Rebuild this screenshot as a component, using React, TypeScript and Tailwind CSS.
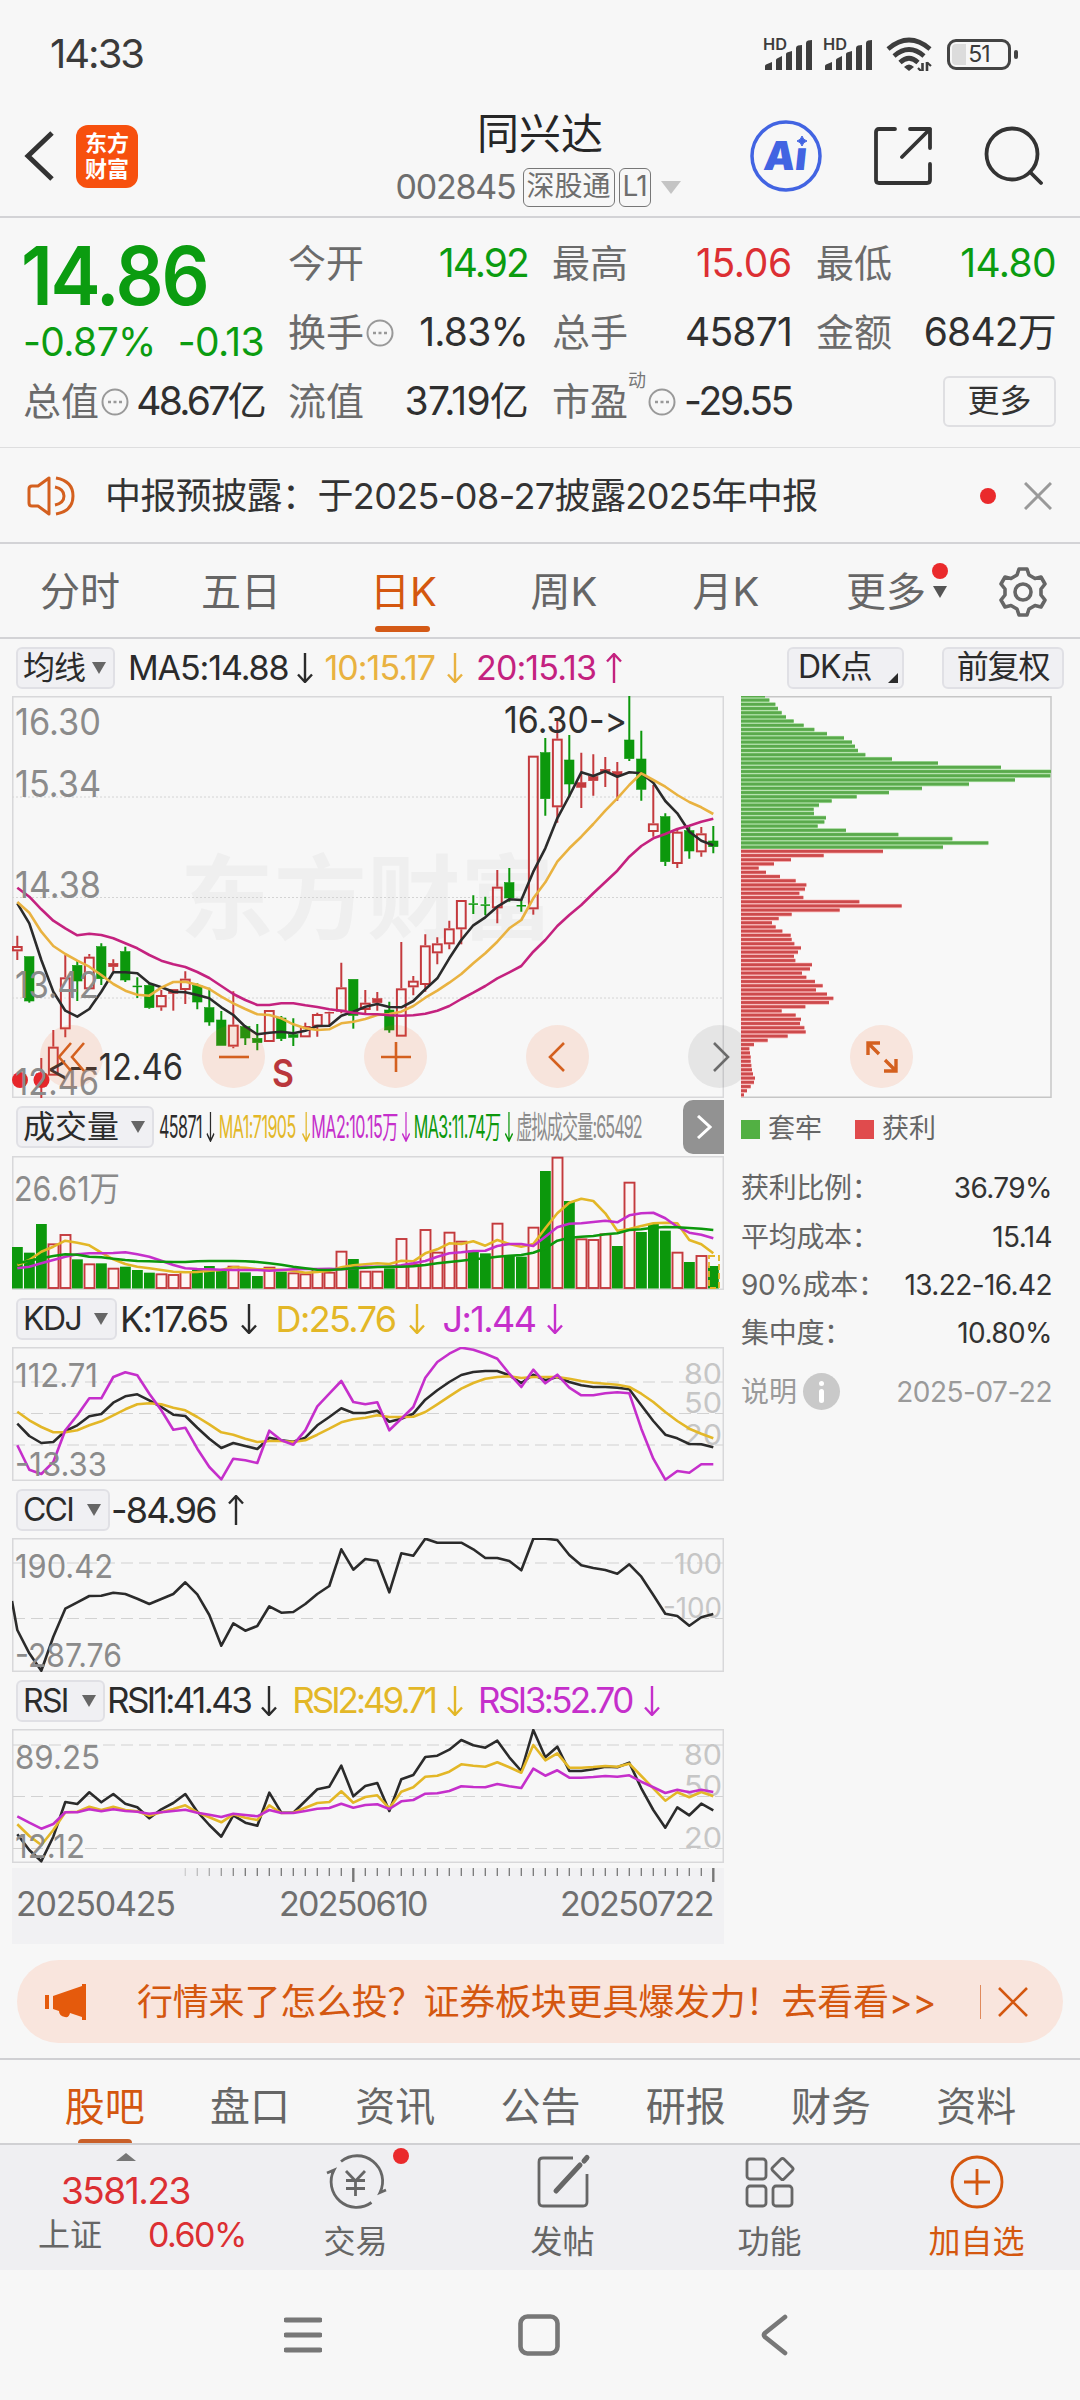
import type { ReactNode } from 'react';

type Candle = [number, number, number, number, 'r' | 'g'];

// every series is stored in thirds of a pixel, one entry per trading day
const STEP = 12;
const dayX = (i: number) => 5.3 + i * STEP;
const toPoints = (ys: number[], top: number) =>
    ys.map((y, i) => `${dayX(i)},${((y - top) / 3).toFixed(1)}`).join(' ');

// high, body top, body bottom, low
const candles: Candle[] = [
    [737, 768, 784, 810, 'r'], [800, 800, 933, 938, 'g'], [1104, 1150, 1190, 1225, 'r'], [1020, 1070, 1157, 1157, 'r'],
    [795, 862, 1018, 1042, 'r'], [812, 826, 873, 933, 'g'], [792, 800, 898, 898, 'r'], [760, 770, 866, 885, 'g'],
    [808, 820, 830, 845, 'r'], [770, 785, 870, 876, 'g'], [862, 887, 889, 924, 'g'], [880, 886, 953, 956, 'g'],
    [900, 915, 952, 962, 'r'], [898, 898, 910, 962, 'r'], [844, 866, 900, 942, 'r'], [880, 886, 936, 958, 'g'],
    [893, 953, 996, 1007, 'g'], [963, 990, 1066, 1066, 'g'], [904, 1004, 1070, 1075, 'r'], [1005, 1010, 1044, 1065, 'g'],
    [1002, 1045, 1058, 1081, 'g'], [960, 960, 1056, 1056, 'r'], [978, 984, 1046, 1053, 'g'], [985, 1034, 1042, 1068, 'g'],
    [998, 1008, 1042, 1042, 'r'], [968, 972, 1010, 1040, 'r'], [965, 966, 970, 1008, 'r'], [818, 892, 965, 970, 'r'],
    [868, 868, 976, 1016, 'g'], [900, 938, 960, 970, 'r'], [906, 926, 938, 962, 'r'], [935, 960, 1020, 1028, 'g'],
    [756, 895, 1040, 1040, 'r'], [858, 872, 892, 916, 'r'], [733, 766, 885, 905, 'r'], [742, 760, 790, 823, 'r'],
    [692, 715, 763, 778, 'r'], [630, 630, 718, 763, 'r'], [616, 640, 643, 672, 'g'], [620, 643, 646, 676, 'g'],
    [540, 590, 655, 700, 'r'], [534, 578, 624, 635, 'g'], [630, 645, 648, 665, 'g'], [197, 197, 658, 674, 'r'],
    [144, 188, 326, 377, 'g'], [88, 146, 352, 398, 'r'], [135, 210, 282, 322, 'g'], [188, 278, 292, 354, 'r'],
    [193, 260, 272, 317, 'r'], [201, 238, 246, 291, 'r'], [216, 245, 255, 332, 'r'], [18, 150, 206, 213, 'g'],
    [122, 207, 298, 332, 'g'], [285, 400, 426, 440, 'r'], [370, 380, 515, 528, 'g'], [420, 425, 522, 534, 'r'],
    [410, 422, 483, 506, 'g'], [411, 430, 487, 500, 'r'], [408, 453, 470, 490, 'g'],
];

const ma5 = [640, 700, 810, 905, 962, 980, 957, 905, 847, 847, 850, 880, 892, 905, 907, 915, 925, 952, 975, 1010, 1033, 1028, 1025, 1030, 1022, 1008, 1007, 977, 965, 950, 942, 951, 952, 933, 898, 865, 805, 750, 706, 682, 650, 628, 630, 545, 475, 385, 318, 247, 258, 244, 260, 247, 250, 278, 333, 370, 425, 452, 466];
const ma10 = [636, 668, 725, 768, 792, 812, 830, 855, 882, 902, 914, 917, 893, 876, 875, 884, 897, 920, 940, 957, 973, 975, 985, 1003, 1015, 1020, 1018, 1000, 995, 987, 975, 972, 965, 948, 923, 902, 878, 852, 820, 790, 755, 715, 690, 625, 577, 515, 475, 440, 402, 362, 325, 285, 250, 270, 290, 315, 336, 352, 372];
const ma20 = [593, 620, 658, 692, 715, 736, 731, 735, 745, 760, 775, 795, 812, 823, 831, 846, 864, 888, 912, 930, 945, 945, 940, 940, 946, 951, 958, 962, 968, 972, 973, 976, 977, 976, 971, 962, 948, 927, 908, 888, 865, 847, 828, 785, 750, 708, 675, 645, 610, 576, 542, 500, 468, 445, 432, 417, 407, 395, 386];

const volume = [441, 458, 372, 430, 402, 478, 490, 490, 503, 500, 510, 518, 520, 522, 513, 510, 498, 510, 497, 517, 528, 500, 515, 517, 520, 504, 515, 452, 477, 512, 512, 505, 414, 492, 387, 455, 395, 422, 452, 460, 368, 465, 470, 380, 213, 170, 303, 415, 417, 400, 438, 245, 396, 372, 392, 455, 486, 465, 498];
const volumeSide = 'gggrrgrgrgggrrrgggrggrgrrrrrgrrgrrrrrrggrggrgrgrrrgrgggrgrg';
const vol1 = [495, 480, 455, 440, 422, 428, 436, 458, 478, 492, 500, 505, 510, 515, 517, 516, 512, 510, 502, 503, 508, 508, 509, 512, 518, 516, 512, 502, 496, 493, 490, 492, 482, 484, 460, 448, 430, 432, 424, 437, 420, 432, 440, 432, 385, 340, 308, 296, 303, 340, 392, 387, 378, 370, 368, 370, 420, 433, 460];
const vol2 = [505, 500, 490, 480, 470, 463, 460, 460, 459, 457, 463, 470, 482, 495, 505, 507, 508, 509, 510, 510, 510, 512, 510, 508, 507, 507, 506, 508, 505, 500, 500, 500, 496, 490, 483, 470, 460, 457, 453, 452, 438, 432, 432, 438, 410, 382, 371, 370, 366, 362, 367, 346, 340, 338, 355, 380, 398, 404, 415];
const vol3 = [490, 482, 475, 468, 463, 464, 470, 472, 476, 480, 483, 484, 485, 486, 486, 484, 483, 483, 483, 484, 486, 490, 494, 500, 505, 509, 510, 508, 505, 503, 501, 500, 500, 499, 495, 490, 486, 482, 478, 475, 470, 467, 465, 458, 445, 422, 413, 410, 408, 403, 400, 390, 388, 383, 381, 382, 384, 386, 390];

const kLine = [970, 1007, 1028, 1025, 992, 975, 948, 941, 907, 888, 882, 900, 920, 943, 947, 982, 1015, 1043, 1028, 1037, 1046, 1012, 1020, 1024, 1012, 975, 950, 924, 938, 938, 931, 964, 955, 940, 898, 870, 845, 824, 815, 812, 812, 825, 848, 823, 840, 830, 845, 855, 860, 860, 862, 867, 915, 962, 1003, 1014, 1031, 1032, 1041];
const dLine = [934, 960, 980, 996, 996, 990, 975, 963, 945, 927, 912, 909, 912, 922, 930, 950, 972, 996, 1003, 1015, 1025, 1022, 1022, 1025, 1020, 1003, 985, 966, 957, 952, 945, 950, 950, 949, 935, 912, 888, 865, 848, 835, 830, 828, 833, 830, 830, 830, 835, 842, 847, 850, 853, 860, 880, 905, 935, 962, 985, 1000, 1014];
const jLine = [1035, 1108, 1121, 1085, 990, 945, 894, 894, 830, 816, 825, 880, 930, 988, 982, 1045, 1100, 1137, 1075, 1080, 1088, 991, 1020, 1033, 990, 918, 880, 842, 905, 912, 906, 990, 955, 920, 832, 785, 760, 742, 748, 760, 775, 820, 860, 808, 849, 823, 862, 885, 885, 879, 876, 879, 985, 1075, 1138, 1112, 1117, 1092, 1092];

const cci = [450, 520, 572, 470, 386, 367, 348, 347, 338, 342, 356, 372, 357, 342, 307, 343, 405, 497, 430, 452, 438, 379, 398, 396, 372, 342, 318, 208, 269, 237, 242, 337, 220, 227, 176, 188, 188, 188, 208, 234, 234, 243, 271, 176, 176, 180, 225, 256, 264, 270, 281, 253, 290, 345, 401, 408, 437, 412, 402];

const rsi1 = [1063, 1110, 1144, 1070, 966, 972, 937, 967, 942, 971, 982, 1015, 988, 969, 942, 995, 1035, 1070, 1006, 1028, 1037, 938, 998, 998, 963, 928, 920, 857, 949, 918, 909, 993, 898, 885, 831, 827, 809, 780, 796, 803, 782, 832, 873, 750, 832, 800, 873, 873, 868, 860, 862, 848, 925, 990, 1043, 982, 1006, 971, 991];
const rsi2 = [1033, 1068, 1095, 1050, 997, 995, 980, 990, 980, 990, 994, 1007, 997, 987, 976, 997, 1012, 1027, 1003, 1013, 1020, 976, 999, 998, 983, 969, 966, 934, 968, 951, 946, 985, 935, 922, 890, 887, 875, 853, 857, 860, 847, 862, 878, 795, 841, 820, 863, 863, 861, 858, 860, 851, 888, 925, 962, 937, 952, 936, 949];
const rsi3 = [1009, 1028, 1046, 1032, 997, 997, 988, 994, 988, 993, 995, 1001, 997, 993, 989, 998, 1004, 1011, 1001, 1005, 1009, 990, 999, 999, 993, 986, 984, 971, 983, 975, 973, 987, 964, 960, 941, 940, 933, 919, 921, 922, 912, 919, 924, 866, 887, 871, 893, 893, 891, 888, 890, 886, 905, 922, 939, 929, 937, 929, 936];

const trapped = [72, 85, 103, 111, 122, 135, 158, 188, 220, 258, 309, 333, 342, 351, 373, 453, 591, 780, 930, 928, 822, 684, 543, 444, 347, 272, 234, 218, 219, 255, 250, 230, 315, 472, 634, 742, 606];
const profit = [426, 248, 150, 99, 53, 75, 117, 164, 196, 192, 175, 187, 355, 482, 296, 152, 113, 93, 104, 124, 149, 152, 160, 180, 171, 159, 163, 213, 207, 183, 196, 222, 245, 225, 258, 277, 264, 193, 122, 164, 180, 177, 190, 194, 140, 80, 39, 25, 27, 29, 29, 31, 33, 36, 42, 39, 29, 18, 9];

const RED = '#c43a3d';
const GREEN = '#0c980c';
const YELLOW = '#e3b727';
const PURPLE = '#c52fcb';
const BLACK = '#2b2b2b';

function Label({ x, y, w, size, fill = '#8b8b8b', children }: { x: number; y: number; w: number; size: number; fill?: string; children: string }) {
    return (
        <text x={x} y={y} fontSize={size} fill={fill} textLength={w} lengthAdjust="spacingAndGlyphs">
            {children}
        </text>
    );
}

function Line({ ys, top, color }: { ys: number[]; top: number; color: string }) {
    return <polyline points={toPoints(ys, top)} fill="none" stroke={color} strokeWidth="2.6" strokeLinejoin="round" />;
}

function Guides({ at }: { at: number[] }) {
    return (
        <>
            {at.map((y) => (
                <line key={y} x1="1" x2="711" y1={y} y2={y} stroke="#d2d2d2" strokeWidth="1.2" strokeDasharray="12 6" />
            ))}
        </>
    );
}

function Frame({ h }: { h: number }) {
    return <rect x="0.75" y="0.75" width="710.5" height={h - 1.5} fill="none" stroke="#d8d8da" strokeWidth="1.5" />;
}

function Arrow({ up = false, className = '' }: { up?: boolean; className?: string }) {
    return (
        <svg viewBox="0 0 16 30" className={`w-4 h-[30px] shrink-0 ${up ? 'rotate-180' : ''} ${className}`} fill="none" stroke="currentColor" strokeWidth="2.4">
            <path d="M8 0V29M1 21.5L8 29L15 21.5" />
        </svg>
    );
}

function Picker({ label, className }: { label: string; className: string }) {
    return (
        <div className={`h-[42px] shrink-0 flex items-center justify-between pl-[5px] pr-[7px] rounded-md bg-[#f0f0f3] border-2 border-[#e0e0e5] text-[#2b2b2b] ${className}`}>
            <span>{label}</span>
            <svg viewBox="0 0 14 12" className="w-3.5 h-3" fill="#666">
                <path d="M0 0H14L7 12Z" />
            </svg>
        </div>
    );
}

function Dots({ className = '' }: { className?: string }) {
    return (
        <svg viewBox="0 0 28 28" className={`w-7 h-7 shrink-0 ${className}`} fill="none" stroke="#999" strokeWidth="2">
            <circle cx="14" cy="14" r="12.5" />
            <path d="M7 14h3M12.5 14h3M18 14h3" strokeWidth="2.6" />
        </svg>
    );
}

function StatusBar() {
    const signal = (
        <svg viewBox="0 0 50 34" className="w-[50px] h-[34px] overflow-visible" fill="#3d3d3d">
            <text x="0" y="13" fontSize="16" fontWeight="600" textLength="24" lengthAdjust="spacingAndGlyphs">HD</text>
            <path d="M2 33V29Q2 28 3 27.500L9 25V33ZM13 33V23Q13 22 14 21.500L19 19V33Z" />
            <path d="M23 33V17Q23 16 24 15.500L29 14V33ZM33 33V11Q33 9 35 8.500L39 8V33ZM43 33V6Q43 4 45 3.500L49 3V33Z" />
        </svg>
    );
    return (
        <div className="h-[108px] flex items-center pl-[50px] pr-[62px] text-[#3a3a3a]">
            <span className="text-[40px] tracking-[-2px]">14:33</span>
            <div className="ml-auto flex items-center">
                {signal}
                <span className="w-[10px]" />
                {signal}
                <svg viewBox="0 0 46 34" className="ml-[13px] w-[46px] h-[34px]" fill="none" stroke="#3d3d3d" strokeWidth="4.600">
                    <path d="M2 12Q23 -6 44 12M8 19Q23 6 38 19M14 25.500Q23 17 32 25.500" />
                    <path d="M18 30Q23 25 28 30L23 34Z" fill="#3d3d3d" stroke="none" />
                    <path d="M36.500 26V35M41 25V35" strokeWidth="2.600" />
                    <path d="M32 31L36 35M45 29L41 25.500" strokeWidth="2.200" />
                </svg>
                <div className="ml-[15px] w-16 h-[31px] rounded-[9px] border-[3px] border-[#444] p-[2px] flex relative">
                    <div className="w-3.5 h-full rounded-l bg-[#dcdcdc]" />
                    <span className="absolute inset-0 flex items-center justify-center text-[23px] tracking-[-1px]">51</span>
                </div>
                <div className="ml-[3px] w-1 h-[9px] rounded bg-[#444]" />
            </div>
        </div>
    );
}

function Header() {
    return (
        <div className="h-[110px] flex border-b-2 border-[#d3d3d6]">
            <div className="w-[360px] flex items-center gap-[22px] pl-6 pb-[12px]">
                <svg viewBox="0 0 30 50" className="w-[30px] h-[50px]" fill="none" stroke="#333" strokeWidth="5">
                    <path d="M28 2L4 25L28 48" />
                </svg>
                <div className="w-[62px] h-[63px] rounded-xl bg-[#f7500e] text-white font-bold text-[22px] leading-[26px] flex flex-col items-center justify-center">
                    <span>东方</span>
                    <span>财富</span>
                </div>
            </div>
            <div className="w-[360px] flex flex-col items-center">
                <div className="text-[42px] leading-[52px] text-[#262626]">同兴达</div>
                <div className="flex items-center gap-1 text-[#6e6e6e] mt-[7px] pr-[4px]">
                    <span className="text-[34px] leading-10 tracking-[-1.2px] mr-[3px]">002845</span>
                    <span className="h-[39px] px-[3px] rounded-md border-[1.5px] border-[#777] text-[28px] leading-[34px]">深股通</span>
                    <span className="h-[39px] px-[3px] rounded-md border-[1.5px] border-[#777] text-[28px] leading-[34px] tracking-[-1px]">L1</span>
                    <svg viewBox="0 0 20 13" className="w-5 h-[13px] ml-[6px]" fill="#c4c4c4">
                        <path d="M0 0H20L10 13Z" />
                    </svg>
                </div>
            </div>
            <div className="w-[360px] flex items-center gap-[51px] pl-[29px] pb-[12px]">
                <svg viewBox="0 0 74 74" className="w-[74px] h-[74px]">
                    <circle cx="37" cy="37" r="34" fill="none" stroke="#4264e2" strokeWidth="3.5" />
                    <text x="19" y="51" fontSize="40" fontWeight="900" fill="#4264e2" textLength="43" lengthAdjust="spacingAndGlyphs" transform="skewX(-6)">Aı</text>
                    <path d="M53 17Q54 21 58 22Q54 23 53 27Q52 23 48 22Q52 21 53 17Z" fill="#4264e2" stroke="#4264e2" />
                </svg>
                <svg viewBox="0 0 58 58" className="w-[58px] h-[58px]" fill="none" stroke="#333" strokeWidth="3.8" strokeLinecap="round" strokeLinejoin="round">
                    <path d="M21 2H5Q2 2 2 5V53Q2 56 5 56H53Q56 56 56 53V37" />
                    <path d="M36 2H56V21M56 2L28 30" />
                </svg>
                <svg viewBox="0 0 60 60" className="w-[60px] h-[60px]" fill="none" stroke="#333" strokeWidth="3.8" strokeLinecap="round">
                    <circle cx="29" cy="28" r="25.500" />
                    <path d="M47 46L58 57" />
                </svg>
            </div>
        </div>
    );
}

function Quote({ label, value, className = 'text-[#2f2f2f] tracking-[-0.800px]', children }: { label: string; value: string; className?: string; children?: ReactNode }) {
    return (
        <div className="h-[69px] flex items-center">
            <span className="text-[38px] text-[#6b6b6b]">{label}</span>
            {children}
            <span className={`ml-auto text-[39px] ${className}`}>{value}</span>
        </div>
    );
}

function Quotes() {
    return (
        <div className="h-[230px] grid grid-cols-[241px_240px_240px_240px] gap-x-6 pl-[23px] pt-[11px] border-b border-[#dededf]">
            <div>
                <div className="h-[89px] -ml-[2px] text-[81px] leading-[94px] font-semibold tracking-[-2.500px] origin-left scale-x-[0.93] text-[#0b9c10]">14.86</div>
                <div className="h-[49px] flex items-center justify-between text-[39px] tracking-[-0.600px] text-[#0b9c10]">
                    <span>-0.87%</span>
                    <span>-0.13</span>
                </div>
                <Quote label="总值" value="48.67亿" className="text-[#2f2f2f] tracking-[-2.700px]"><Dots className="ml-[2px]" /></Quote>
            </div>
            <div>
                <Quote label="今开" value="14.92" className="text-[#0b9c10] tracking-[-1.900px]" />
                <Quote label="换手" value="1.83%"><Dots className="ml-[2px]" /></Quote>
                <Quote label="流值" value="37.19亿" className="text-[#2f2f2f] tracking-[-0.800px]" />
            </div>
            <div>
                <Quote label="最高" value="15.06" className="text-[#dc2f33] tracking-[-0.300px]" />
                <Quote label="总手" value="45871" />
                <Quote label="市盈" value="-29.55" className="text-[#2f2f2f] tracking-[-2.300px]">
                    <span className="self-start text-[18px] text-[#777]">动</span>
                    <Dots className="ml-[2px]" />
                </Quote>
            </div>
            <div>
                <Quote label="最低" value="14.80" className="text-[#0b9c10] tracking-[-0.600px]" />
                <Quote label="金额" value="6842万" />
                <div className="h-[69px] flex items-center justify-end">
                    <span className="w-[113px] h-[51px] rounded-md border-2 border-[#dfdfe2] text-[32px] leading-[46px] text-center text-[#333]">更多</span>
                </div>
            </div>
        </div>
    );
}

function Notice() {
    return (
        <div className="h-[96px] flex items-center pt-px pl-[27px] pr-7 border-b-2 border-[#d3d3d6]">
            <svg viewBox="0 0 48 40" className="w-12 h-10 mr-[30px]" fill="none" stroke="#d4601f" strokeWidth="3">
                <path d="M22 2V38L11 30H5Q2 30 2 27V13Q2 10 5 10H11Z" strokeLinejoin="round" />
                <path d="M29 2Q46 5 46 20Q46 35 29 38M28 11Q37 13 37 20Q37 27 28 29" />
            </svg>
            <span className="text-[36px] text-[#333] tracking-[-0.6px]">中报预披露：于2025-08-27披露2025年中报</span>
            <span className="w-4 h-4 rounded-full bg-[#ea2a2c] ml-auto mr-[28px]" />
            <svg viewBox="0 0 28 28" className="w-7 h-7" fill="none" stroke="#999" strokeWidth="3">
                <path d="M1 1L27 27M27 1L1 27" />
            </svg>
        </div>
    );
}

function PeriodTabs() {
    return (
        <div className="h-[95px] pt-[2px] flex items-center border-b-2 border-[#d3d3d6] text-[40px] text-[#666]">
            <span className="w-40 text-center">分时</span>
            <span className="w-[162px] text-center">五日</span>
            <span className="w-[163px] h-full text-center leading-[91px] text-[#d4570f] relative">
                日K
                <span className="absolute left-[53px] bottom-[5px] w-[55px] h-[6px] rounded bg-[#d45a17]" />
            </span>
            <span className="w-[158px] text-center">周K</span>
            <span className="w-[166px] text-center">月K</span>
            <span className="ml-[37px] relative">
                更多
                <span className="absolute left-[86px] top-[1px] w-4 h-4 rounded-full bg-[#ea2a2c]" />
                <svg viewBox="0 0 14 12" className="absolute left-[87px] top-[24px] w-3.5 h-3" fill="#555">
                    <path d="M0 0H14L7 12Z" />
                </svg>
            </span>
            <svg viewBox="0 0 48 50" className="w-12 h-[50px] ml-[73px]" fill="none" stroke="#666" strokeWidth="3.600" strokeLinejoin="round">
                <path d="M20 2H28L30 8L36 11.500L42 10L46 17L42 22V28L46 33L42 40L36 38.500L30 42L28 48H20L18 42L12 38.500L6 40L2 33L6 28V22L2 17L6 10L12 11.500L18 8Z" />
                <circle cx="24" cy="25" r="8" />
            </svg>
        </div>
    );
}

function AverageRow() {
    return (
        <div className="h-[57px] flex items-center pl-4 pr-4 text-[34px] tracking-[-1.1px]">
            <Picker label="均线" className="w-[99px] text-[32px]" />
            <span className="ml-[13px] text-[#2b2b2b]">MA5:14.88</span>
            <Arrow className="ml-[9px] text-[#2b2b2b]" />
            <span className="ml-[11px] tracking-[-1px] text-[#e9b240]">10:15.17</span>
            <Arrow className="ml-[12px] text-[#e9b240]" />
            <span className="ml-[13px] tracking-[-0.900px] text-[#c4227f]">20:15.13</span>
            <Arrow up className="ml-[10px] text-[#c4227f]" />
            <span className="ml-auto w-[117px] h-[42px] rounded-md bg-[#f0f0f3] border-2 border-[#e0e0e5] text-[32px] leading-9 pl-[9px] text-[#2b2b2b] relative">
                DK点
                <svg viewBox="0 0 10 10" className="absolute right-1 bottom-1 w-2.5 h-2.5" fill="#2b2b2b">
                    <path d="M10 0V10H0Z" />
                </svg>
            </span>
            <span className="ml-[38px] w-[122px] h-[42px] rounded-md bg-[#f0f0f3] border-2 border-[#e0e0e5] text-[32px] leading-9 text-center text-[#2b2b2b]">前复权</span>
        </div>
    );
}

function CandleChart() {
    return (
        <svg viewBox="0 0 712 402" className="block w-[712px] h-[402px]">
            <text x="168" y="236" fontSize="92" fontWeight="700" fill="#efefef" textLength="374" lengthAdjust="spacingAndGlyphs">东方财富</text>
            <Frame h={402} />
            {[101, 201.5, 302].map((y) => (
                <line key={y} x1="0" x2="712" y1={y} y2={y} stroke="#d4d4d4" strokeWidth="1" strokeDasharray="2 2" />
            ))}
            {candles.map(([high, top, bottom, low, side], i) => {
                const x = dayX(i);
                const y = (v: number) => (v - 18) / 3;
                const color = side === 'r' ? RED : GREEN;
                const h = Math.max(y(bottom) - y(top), 1.5);
                return (
                    <g key={i} stroke={color} strokeWidth="2">
                        <path d={`M${x} ${y(high)}V${y(top)}M${x} ${y(bottom)}V${y(low)}`} />
                        {side === 'g' || h < 5
                            ? <rect x={x - 4.7} y={y(top)} width="9.400" height={h} fill={color} strokeWidth={h < 2 ? 0 : 0.6} />
                            : <rect x={x - 4.4} y={y(top) + 1} width="8.800" height={h - 2} fill="#f8f8f8" fillOpacity="0.4" />}
                    </g>
                );
            })}
            <Line ys={ma5} top={18} color={BLACK} />
            <Line ys={ma10} top={18} color="#e9b240" />
            <Line ys={ma20} top={18} color="#c4227f" />
            <circle cx="8" cy="384" r="8" fill="#e6262a" />
            <circle cx="29.500" cy="384" r="8" fill="#e6262a" />
            <Label x={3} y={39} w={86} size={37}>16.30</Label>
            <Label x={3} y={101} w={86} size={37}>15.34</Label>
            <Label x={3} y={202} w={86} size={37}>14.38</Label>
            <Label x={3} y={302} w={84} size={37}>13.42</Label>
            <Label x={3} y={399} w={84} size={37}>12.46</Label>
            <g className="[font-feature-settings:'calt'_0]">
                <Label x={492} y={37} w={123} size={37} fill="#303030">{'16.30->'}</Label>
                <Label x={35} y={384} w={136} size={37} fill="#303030">{'<--12.46'}</Label>
            </g>
            <text x="260" y="391" fontSize="38" fontWeight="600" fill="#b9373c" textLength="22" lengthAdjust="spacingAndGlyphs">S</text>
        </svg>
    );
}

function ChartButton({ className, children }: { className: string; children: ReactNode }) {
    return (
        <div className={`absolute top-[329px] w-[63px] h-[63px] rounded-full flex items-center justify-center ${className}`}>
            <svg viewBox="0 0 32 32" className="w-8 h-8" fill="none" stroke="currentColor" strokeWidth="2.600">
                {children}
            </svg>
        </div>
    );
}

function VolumeChart() {
    return (
        <svg viewBox="0 0 712 134" className="block w-[712px] h-[134px]">
            <Frame h={134} />
            {volume.map((top, i) => {
                const y = (top - 168) / 3;
                return volumeSide[i] === 'g'
                    ? <rect key={i} x={dayX(i) - 5.3} y={y} width="10.800" height={132.500 - y} fill={GREEN} />
                    : <rect key={i} x={dayX(i) - 4.8} y={y + 1} width="10" height={131 - y} fill="#fdf5f5" stroke={RED} strokeWidth="1.900" />;
            })}
            <rect x="697" y="100" width="10" height="32" fill="none" stroke={YELLOW} strokeWidth="1.800" strokeDasharray="6 3" />
            <Line ys={vol1} top={168} color={YELLOW} />
            <Line ys={vol2} top={168} color={PURPLE} />
            <Line ys={vol3} top={168} color={GREEN} />
            <Label x={2} y={45} w={106} size={34}>26.61万</Label>
        </svg>
    );
}

function KdjChart() {
    return (
        <svg viewBox="0 0 712 134" className="block w-[712px] h-[134px]">
            <Frame h={134} />
            <Guides at={[35, 66.5, 98]} />
            <Label x={672} y={37} w={38} size={29} fill="#c6c6c6">80</Label>
            <Label x={672} y={66} w={38} size={29} fill="#c6c6c6">50</Label>
            <Label x={672} y={98} w={38} size={29} fill="#c6c6c6">20</Label>
            <Line ys={kLine} top={740} color={BLACK} />
            <Line ys={dLine} top={740} color={YELLOW} />
            <Line ys={jLine} top={740} color={PURPLE} />
            <Label x={3} y={40} w={83} size={33}>112.71</Label>
            <Label x={3} y={129} w={92} size={33}>-13.33</Label>
        </svg>
    );
}

function CciChart() {
    return (
        <svg viewBox="0 0 712 134" className="block w-[712px] h-[134px]">
            <Frame h={134} />
            <Guides at={[25, 80.5]} />
            <Label x={662} y={36} w={48} size={29} fill="#c6c6c6">100</Label>
            <Label x={651} y={80} w={59} size={29} fill="#c6c6c6">-100</Label>
            <polyline points={`0,63 ${toPoints(cci, 174)}`} fill="none" stroke={BLACK} strokeWidth="2.6" strokeLinejoin="round" />
            <Label x={3} y={40} w={98} size={33}>190.42</Label>
            <Label x={3} y={129} w={107} size={33}>-287.76</Label>
        </svg>
    );
}

function RsiChart() {
    return (
        <svg viewBox="0 0 712 134" className="block w-[712px] h-[134px]">
            <Frame h={134} />
            <Guides at={[16, 67.5, 119.5]} />
            <Label x={672} y={36} w={38} size={29} fill="#c6c6c6">80</Label>
            <Label x={672} y={67} w={38} size={29} fill="#c6c6c6">50</Label>
            <Label x={672} y={119} w={38} size={29} fill="#c6c6c6">20</Label>
            <Line ys={rsi1} top={747} color={BLACK} />
            <Line ys={rsi2} top={747} color={YELLOW} />
            <Line ys={rsi3} top={747} color={PURPLE} />
            <Label x={3} y={40} w={85} size={33}>89.25</Label>
            <Label x={3} y={129} w={70} size={33}>12.12</Label>
        </svg>
    );
}

function TimeAxis() {
    return (
        <div className="h-[76px] mt-[5px] bg-[#f1f1f3] text-[34px] text-[#6f6f6f]">
            <svg viewBox="0 0 712 16" className="block w-[712px] h-4">
                {Array.from({ length: 45 }, (_, n) => n + 14).map((i) => (
                    <line
                        key={i}
                        x1={dayX(i)}
                        x2={dayX(i)}
                        y1="0"
                        y2={i === 28 || i === 58 ? 14 : 8}
                        stroke="#777"
                        strokeWidth={i === 28 || i === 58 ? 2.4 : 1.3}
                        opacity={Math.min(1, (i - 12) / 7)}
                    />
                ))}
            </svg>
            <div className="flex justify-between pl-[4px] pr-[11px] leading-[39px] tracking-[-1.200px]">
                <span>20250425</span>
                <span className="tracking-[-1.700px] mr-[29px]">20250610</span>
                <span className="tracking-[-1.500px]">20250722</span>
            </div>
        </div>
    );
}

function Indicators() {
    return (
        <div className="w-[712px] ml-3 relative">
            <CandleChart />
            <ChartButton className="left-[28px] bg-[#f9622020] text-[#d4601f]"><path d="M15 2L3 16L15 30M28 2L16 16L28 30" /></ChartButton>
            <ChartButton className="left-[190px] bg-[#f9622020] text-[#d4601f]"><path d="M1 16H31" /></ChartButton>
            <ChartButton className="left-[352px] bg-[#f9622020] text-[#d4601f]"><path d="M1 16H31M16 1V31" /></ChartButton>
            <ChartButton className="left-[514px] bg-[#f9622020] text-[#d4601f]"><path d="M22 2L8 16L22 30" /></ChartButton>
            <ChartButton className="left-[676px] bg-[#00000012] text-[#6b6b6b]"><path d="M10 2L24 16L10 30" /></ChartButton>

            <div className="h-[58px] flex items-center pl-1">
                <Picker label="成交量" className="w-[138px] text-[32px]" />
                <div className="ml-[5px] w-[520px] h-[42px] relative">
                    <div className="absolute left-0 top-0 h-full flex items-center text-[31px] tracking-[-1.100px] whitespace-nowrap origin-left scale-x-[0.52]">
                        <span className="flex items-center gap-2 w-[115px] text-[#2b2b2b]">45871<Arrow /></span>
                        <span className="flex items-center gap-3 w-[178px] text-[#e3b727]">MA1:71905<Arrow /></span>
                        <span className="flex items-center gap-2 w-[197px] text-[#c52fcb]">MA2:10.15万<Arrow /></span>
                        <span className="flex items-center gap-2 w-[197px] text-[#0c980c]">MA3:11.74万<Arrow /></span>
                        <span className="text-[#8b8b8b] tracking-[-1.700px]">虚拟成交量:65492</span>
                    </div>
                </div>
                <div className="ml-auto w-[41px] h-[54px] rounded-l-[10px] bg-[#929292] flex items-center justify-center">
                    <svg viewBox="0 0 16 24" className="w-4 h-6" fill="none" stroke="#fff" strokeWidth="3">
                        <path d="M2 1L14 12L2 23" />
                    </svg>
                </div>
            </div>
            <VolumeChart />

            <div className="h-[57px] flex items-center pl-1 text-[36px] tracking-[-1.600px]">
                <Picker label="KDJ" className="w-[101px] text-[32px]" />
                <span className="ml-[3px] text-[#2b2b2b]">K:17.65</span>
                <Arrow className="ml-[13px] text-[#2b2b2b]" />
                <span className="ml-[19px] text-[#e3b727]">D:25.76</span>
                <Arrow className="ml-[13px] text-[#e3b727]" />
                <span className="ml-[18px] text-[#c52fcb]">J:1.44</span>
                <Arrow className="ml-[12px] -mr-4 text-[#c52fcb]" />
            </div>
            <KdjChart />

            <div className="h-[57px] flex items-center pl-1 text-[36px] tracking-[-1.800px]">
                <Picker label="CCI" className="w-[94px] text-[32px]" />
                <span className="ml-[1px] text-[#2b2b2b]">-84.96</span>
                <Arrow up className="ml-[12px] text-[#2b2b2b]" />
            </div>
            <CciChart />

            <div className="h-[57px] flex items-center pl-1 text-[35px] tracking-[-2.600px]">
                <Picker label="RSI" className="w-[89px] text-[32px] tracking-[-1.700px]" />
                <span className="ml-[2px] text-[#2b2b2b]">RSI1:41.43</span>
                <Arrow className="ml-[11px] text-[#2b2b2b]" />
                <span className="ml-[15px] tracking-[-3px] text-[#e3b727]">RSI2:49.71</span>
                <Arrow className="ml-[12px] text-[#e3b727]" />
                <span className="ml-[15px] text-[#c52fcb]">RSI3:52.70</span>
                <Arrow className="ml-[12px] text-[#c52fcb]" />
            </div>
            <RsiChart />
            <TimeAxis />
        </div>
    );
}

const chipStats = [
    ['获利比例：', '36.79%'],
    ['平均成本：', '15.14'],
    ['90%成本：', '13.22-16.42'],
    ['集中度：', '10.80%'],
];

function ChipPanel() {
    return (
        <div className="w-[311px] ml-[17px] relative">
            <svg viewBox="0 0 311 402" className="block w-[311px] h-[402px] bg-[#f8f8f8] relative">
                <path d="M0 0.7H310V401.300H0" fill="none" stroke="#c6c6c6" strokeWidth="1.500" />
                {[...trapped, ...profit].map((w, i) => {
                    const y = i * 4.2 - 1.5;
                    const green = i < trapped.length;
                    return (
                        <g key={i}>
                            <rect x="0" y={y - 0.6} width={w / 3} height="4.200" fill={green ? '#a5dc9c' : '#f7b3b3'} />
                            <rect x="0" y={y} width={w / 3} height="2.800" fill={green ? '#5aaa4c' : '#cd4a4c'} />
                        </g>
                    );
                })}
            </svg>
            <ChartButton className="left-[109px] bg-[#f9622020] text-[#d4601f]">
                <path d="M2 14V2H14M2 2L13 13M30 18V30H18M30 30L19 19" strokeWidth="3.400" />
            </ChartButton>
            <div className="mt-[11px] h-10 flex items-center text-[27px] text-[#666]">
                <span className="w-[19px] h-[19px] bg-[#52b043] mr-2" />
                套牢
                <span className="w-[19px] h-[19px] bg-[#e04b4d] ml-[33px] mr-2" />
                获利
            </div>
            <div className="mt-[15px]">
                {chipStats.map(([label, value]) => (
                    <div key={label} className="h-[48.400px] flex items-center justify-between text-[28px] text-[#666]">
                        <span className="tracking-[-0.300px]">{label}</span>
                        <span className="text-[#333] tracking-[-0.600px]">{value}</span>
                    </div>
                ))}
            </div>
            <div className="mt-[10px] h-[48px] flex items-center text-[28px] text-[#9a9a9a]">
                说明
                <span className="ml-[6px] w-[37px] h-[37px] rounded-full bg-[#c9c9c9] flex flex-col items-center justify-center gap-[3px]">
                    <span className="w-[5px] h-[5px] rounded-full bg-white" />
                    <span className="w-[5px] h-[14px] rounded-sm bg-white" />
                </span>
                <span className="ml-auto tracking-[-0.500px]">2025-07-22</span>
            </div>
        </div>
    );
}

function Banner() {
    return (
        <div className="mx-[17px] mt-[16px] h-[83px] rounded-full bg-[#f9e5dd] flex items-center pl-7 pr-[35px] text-[#d4570f]">
            <svg viewBox="0 0 42 36" className="w-[42px] h-9 mr-[50px]" fill="#e55a0c">
                <path d="M0 11H4V25H0ZM8 12L37 2V0H41V36H37V33L25 29Q24 34 20 33Q14 32 14 27L8 25Z" />
            </svg>
            <span className="text-[36px] whitespace-nowrap tracking-[-0.200px]">行情来了怎么投？证券板块更具爆发力！去看看&gt;&gt;</span>
            <span className="ml-auto w-[1.500px] h-[34px] bg-[#e08a5c] mr-[17px]" />
            <svg viewBox="0 0 30 30" className="w-[30px] h-[30px]" fill="none" stroke="#d4570f" strokeWidth="2.600">
                <path d="M1 1L29 29M29 1L1 29" />
            </svg>
        </div>
    );
}

function SectionTabs() {
    const tabs = ['股吧', '盘口', '资讯', '公告', '研报', '财务', '资料'];
    return (
        <div className="mt-[15px] h-[87px] flex border-y-2 border-[#d0d0d3] pl-8 pr-[31px]">
            {tabs.map((tab, i) => (
                <div key={tab} className={`flex-1 flex flex-col items-center justify-between text-[40px] leading-[60px] pt-[17px] ${i === 0 ? 'text-[#d4570f]' : 'text-[#666]'}`}>
                    <span>{tab}</span>
                    {i === 0 && <span className="w-[54px] h-1 rounded-t bg-[#c9602a]" />}
                </div>
            ))}
        </div>
    );
}

function BottomItem({ label, className = 'text-[#666]', children }: { label: string; className?: string; children: ReactNode }) {
    return (
        <div className={`flex-1 flex flex-col items-center pt-[9px] ${className}`}>
            <svg viewBox="0 0 56 56" className="w-14 h-14 overflow-visible" fill="none" stroke="currentColor" strokeWidth="2.800">
                {children}
            </svg>
            <span className="mt-[9px] text-[32px] leading-[46px]">{label}</span>
        </div>
    );
}

function BottomBar() {
    return (
        <div className="h-[125px] flex bg-[#efeff2]">
            <div className="w-[252px] text-[#dc2f33] relative">
                <svg viewBox="0 0 20 8" className="absolute left-[116px] top-[8px] w-5 h-2" fill="#777">
                    <path d="M0 8H20L10 0Z" />
                </svg>
                <div className="pt-[24px] pl-[61px] text-[37px] leading-[43px] tracking-[-1.500px]">3581.23</div>
                <div className="pl-[38px] flex items-center leading-[46px]">
                    <span className="w-[110px] text-[32px] text-[#666]">上证</span>
                    <span className="text-[34px] tracking-[-1.500px]">0.60%</span>
                </div>
            </div>
            <BottomItem label="交易">
                <path d="M13 7.500A25.500 25.500 0 0 1 52 38.500L58 36M43.500 48.500A25.500 25.500 0 0 1 6 16L-1 19" />
                <path d="M18 17L27.500 27L37 17M27.500 27V42M18 26.500H37M18 34.500H37" />
                <circle cx="73" cy="2" r="8" fill="#ea2a2c" stroke="none" />
            </BottomItem>
            <BottomItem label="发帖">
                <path d="M38 4H8Q4 4 4 8V48Q4 52 8 52H48Q52 52 52 48V20" />
                <path d="M21 37L45 11M49 7L52 3.500" strokeWidth="5" strokeLinecap="round" />
            </BottomItem>
            <BottomItem label="功能">
                <rect x="5" y="5" width="19" height="20" rx="3" />
                <rect x="5" y="32" width="19" height="20" rx="3" />
                <rect x="31" y="32" width="19" height="20" rx="3" />
                <rect x="32.500" y="7" width="16" height="16" rx="2" transform="rotate(45 40.500 15)" />
            </BottomItem>
            <BottomItem label="加自选" className="text-[#d4570f]">
                <circle cx="28" cy="28" r="25" />
                <path d="M15 28H41M28 15V41" />
            </BottomItem>
        </div>
    );
}

function SystemNav() {
    return (
        <div className="h-[130px] flex items-center text-[#777]">
            <svg viewBox="0 0 38 38" className="w-[38px] h-[38px] ml-[284px]" fill="none" stroke="currentColor" strokeWidth="5" strokeLinecap="round">
                <path d="M2 4H36M2 19H36M2 34H36" />
            </svg>
            <svg viewBox="0 0 42 42" className="w-[42px] h-[42px] ml-[196px]" fill="none" stroke="currentColor" strokeWidth="4.600">
                <rect x="2.500" y="2.500" width="37" height="37" rx="7" />
            </svg>
            <svg viewBox="0 0 28 42" className="w-7 h-[42px] ml-[200px]" fill="none" stroke="currentColor" strokeWidth="4.600" strokeLinecap="round" strokeLinejoin="round">
                <path d="M25 3L5 19Q3 21 5 23L25 39" />
            </svg>
        </div>
    );
}

export default function App() {
    return (
        <div className="w-[1080px] h-[2400px] overflow-hidden bg-[#f7f7f7] font-[Inter,'Noto_Sans_CJK_SC',sans-serif]">
            <StatusBar />
            <Header />
            <Quotes />
            <Notice />
            <PeriodTabs />
            <AverageRow />
            <div className="flex">
                <Indicators />
                <ChipPanel />
            </div>
            <Banner />
            <SectionTabs />
            <BottomBar />
            <SystemNav />
        </div>
    );
}
